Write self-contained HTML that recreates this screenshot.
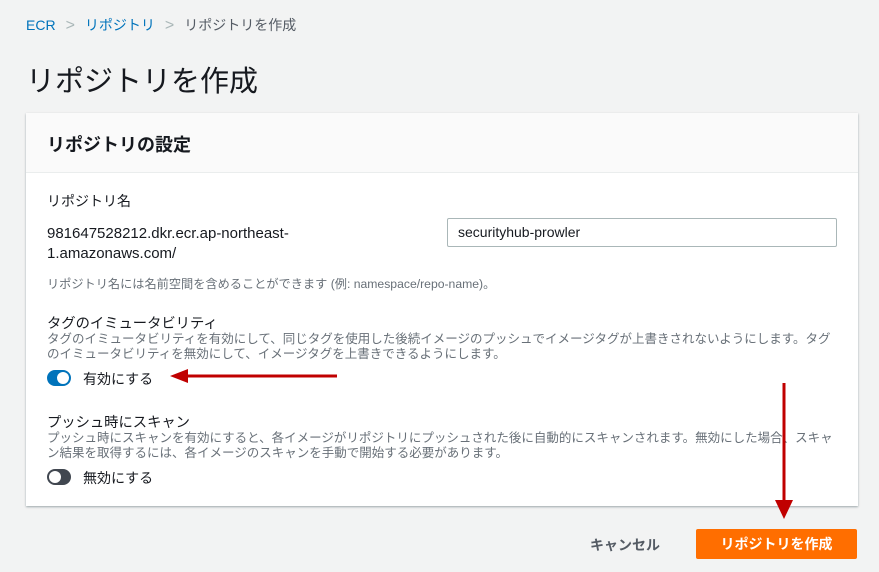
<!DOCTYPE html>
<html><head><meta charset="utf-8"><style>
*{margin:0;padding:0;box-sizing:border-box}
body{width:879px;height:572px;background:#f2f3f3;font-family:"Liberation Sans","Noto Sans CJK JP",sans-serif;color:#16191f;position:relative;overflow:hidden}
.a{position:absolute;white-space:nowrap}
.bc{top:15px;left:26px;font-size:14px;color:#545b64}
.bc .l{color:#0073bb}
.bc .s{color:#aab7b8;margin:0 10px;font-size:16px}
.card{position:absolute;left:26px;top:113px;width:832px;height:393px;background:#fff;box-shadow:0 1px 2px rgba(0,28,36,.35);}
.hd{height:60px;background:#fafafa;border-bottom:1px solid #eaeded}
.g{color:#687078;font-size:12.5px}
.tg{position:absolute;width:24px;height:16px;border-radius:8px}
.tg i{position:absolute;top:2px;width:12px;height:12px;border-radius:50%;background:#fff}
</style></head><body>
<div class="a bc"><span class="l">ECR</span><span class="s">&gt;</span><span class="l">リポジトリ</span><span class="s">&gt;</span>リポジトリを作成</div>
<div class="a" style="top:58px;left:26px;font-size:29px;color:#16191f">リポジトリを作成</div>
<div class="card"><div class="hd"></div></div>
<div class="a" style="top:131px;left:47px;font-size:18px;font-weight:bold">リポジトリの設定</div>
<div class="a" style="top:191px;left:47px;font-size:14px">リポジトリ名</div>
<div class="a" style="top:224px;left:47px;font-size:15px;line-height:20px">981647528212.dkr.ecr.ap-northeast-<br>1.amazonaws.com/</div>
<div class="a" style="top:218px;left:447px;width:390px;height:29px;border:1px solid #aab7b8;border-radius:2px;font-size:14px;padding:5px 10px">securityhub-prowler</div>
<div class="a g" style="top:274px;left:47px;font-size:12.2px">リポジトリ名には名前空間を含めることができます (例: namespace/repo-name)。</div>
<div class="a" style="top:312px;left:47px;font-size:14.3px">タグのイミュータビリティ</div>
<div class="a g" style="top:332px;left:47px;line-height:15px">タグのイミュータビリティを有効にして、同じタグを使用した後続イメージのプッシュでイメージタグが上書きされないようにします。タグ<br>のイミュータビリティを無効にして、イメージタグを上書きできるようにします。</div>
<div class="tg" style="left:47px;top:370px;background:#0073bb"><i style="left:10px"></i></div>
<div class="a" style="top:369px;left:83px;font-size:14px">有効にする</div>
<div class="a" style="top:411px;left:47px;font-size:14.3px">プッシュ時にスキャン</div>
<div class="a g" style="top:431px;left:47px;line-height:15px">プッシュ時にスキャンを有効にすると、各イメージがリポジトリにプッシュされた後に自動的にスキャンされます。無効にした場合、スキャ<br>ン結果を取得するには、各イメージのスキャンを手動で開始する必要があります。</div>
<div class="tg" style="left:47px;top:469px;background:#414750"><i style="left:2px"></i></div>
<div class="a" style="top:468px;left:83px;font-size:14px">無効にする</div>
<div class="a" style="top:535px;left:590px;font-size:14px;font-weight:bold;color:#545b64">キャンセル</div>
<div class="a" style="top:529px;left:696px;width:161px;height:30px;background:#ff6e00;border-radius:2px;color:#fff;font-size:14px;font-weight:bold;text-align:center;line-height:30px">リポジトリを作成</div>
<svg class="a" style="left:0;top:0" width="879" height="572"><g fill="#c00000" stroke="#c00000"><line x1="185" y1="376" x2="337" y2="376" stroke-width="3"/><polygon points="170,376 188,369 188,383" stroke="none"/><line x1="784" y1="383" x2="784" y2="502" stroke-width="3"/><polygon points="784,519 775,500 793,500" stroke="none"/></g></svg>
</body></html>
